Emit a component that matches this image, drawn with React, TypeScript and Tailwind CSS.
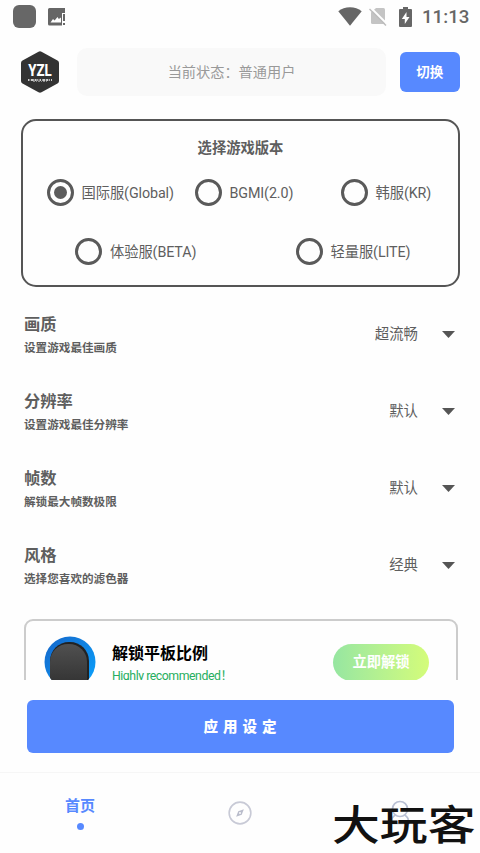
import React, { useState } from 'react';

interface Version {
  id: string;
  label: string;
  className: string;
}

interface Setting {
  title: string;
  subtitle: string;
  value: string;
  className: string;
}

const versionsTop: Version[] = [
  { id: 'global', label: '国际服(Global)', className: 'w-[148px]' },
  { id: 'bgmi', label: 'BGMI(2.0)', className: 'w-[146px]' },
  { id: 'kr', label: '韩服(KR)', className: '' },
];

const versionsBottom: Version[] = [
  { id: 'beta', label: '体验服(BETA)', className: 'w-[220.5px]' },
  { id: 'lite', label: '轻量服(LITE)', className: '' },
];

const settings: Setting[] = [
  { title: '画质', subtitle: '设置游戏最佳画质', value: '超流畅', className: 'h-[77px]' },
  { title: '分辨率', subtitle: '设置游戏最佳分辨率', value: '默认', className: 'h-[77px]' },
  { title: '帧数', subtitle: '解锁最大帧数极限', value: '默认', className: 'h-[77px]' },
  { title: '风格', subtitle: '选择您喜欢的滤色器', value: '经典', className: 'h-[75px]' },
];

const StatusBar: React.FC = () => (
  <div className="flex h-[33px] items-center pl-[13px] pr-[10px] text-[#666]">
    <div className="h-[23px] w-[23px] rounded-[6px] bg-[#676767]" />
    <svg className="ml-3 h-[18px] w-[18px]" viewBox="0 0 18 18" fill="currentColor">
      <path d="M1.500 0H17v5h-3v8.500h1V17.500H1.500A1.500 1.500 0 0 1 0 16V1.500A1.500 1.500 0 0 1 1.500 0Z" />
      <path d="M2.500 14.500 5 11l1.600 1.500L9.500 9l1.300 2L13 9.500v5Z" fill="#fefefe" />
      <path d="M14 5h4v13h-4z" fill="#fefefe" />
      <path d="M15 6h2v7h-2zM15 15h2v2h-2z" />
    </svg>
    <svg className="ml-auto h-[19px] w-[24px]" viewBox="0 0 24 19" fill="currentColor">
      <path d="M12 18.800.3 4.300C3.500 1.700 7.500.3 12 .3s8.500 1.400 11.700 4Z" />
    </svg>
    <svg className="ml-[7px] h-[19px] w-[18px]" viewBox="0 0 18 19">
      <path d="M7 1h7.500A1.500 1.500 0 0 1 16 2.500V17H3.500A1.500 1.500 0 0 1 2 15.500V5.500Z" fill="#c4c4c4" />
      <path d="M1.500.5 18.500 17.500" stroke="#fefefe" strokeWidth="2" />
      <path d="M.5 2 17 18.500" stroke="#bdbdbd" strokeWidth="1.500" />
    </svg>
    <svg className="ml-3 h-[20px] w-[13px]" viewBox="0 0 13 20" fill="currentColor">
      <path d="M4 0h5v2h3a1 1 0 0 1 1 1v16a1 1 0 0 1-1 1H1a1 1 0 0 1-1-1V3a1 1 0 0 1 1-1h3Z" />
      <path d="M7.500 5 2.800 12h3v5l4.700-7h-3Z" fill="#fff" />
    </svg>
    <span className="ml-[10px] w-[48px] whitespace-nowrap pt-px text-[18.700px] font-medium leading-none">11:13</span>
  </div>
);

const Logo: React.FC = () => (
  <svg className="ml-[21px] h-[42px] w-[38px]" viewBox="0 0 38 42">
    <path d="M17.500.700a3 3 0 0 1 3 0L36.500 9.500a3 3 0 0 1 1.500 2.600v17.800a3 3 0 0 1-1.500 2.600L20.500 41.300a3 3 0 0 1-3 0L1.500 32.500A3 3 0 0 1 0 29.900V12.100a3 3 0 0 1 1.500-2.600Z" fill="#333" />
    <text x="19" y="24.500" textAnchor="middle" textLength="23.500" lengthAdjust="spacingAndGlyphs" fontSize="17" fontWeight="800" fill="#fff">YZL</text>
    <path d="M7 29h24" stroke="#fff" strokeWidth="1.600" strokeDasharray="1.500 1.300 3 .8 2 .7 1 1.200" />
    <path d="M12 30.300h14" stroke="#bbb" strokeWidth=".8" strokeDasharray="2 1 1 1" />
  </svg>
);

const Header: React.FC = () => (
  <header className="mt-[15px] flex h-12 items-center">
    <Logo />
    <div className="ml-[18px] flex h-12 w-[309px] items-center justify-center rounded-[10px] bg-[#f9f9f9] pt-px text-[14.200px] text-[#999]">
      当前状态：普通用户
    </div>
    <button className="ml-[13.500px] h-10 w-[60.500px] rounded-[6px] bg-[#5789ff] text-[13.500px] font-bold text-white">
      切换
    </button>
  </header>
);

interface RadioProps {
  version: Version;
  checked: boolean;
  onSelect: (id: string) => void;
}

const Radio: React.FC<RadioProps> = ({ version, checked, onSelect }) => (
  <button className={`flex h-[27px] items-center ${version.className}`} onClick={() => onSelect(version.id)}>
    <span className="flex h-[27px] w-[27px] shrink-0 items-center justify-center rounded-full border-3 border-[#5a5a5a]">
      {checked && <span className="h-[13px] w-[13px] rounded-full bg-[#5c5c5c]" />}
    </span>
    <span className="ml-2 whitespace-nowrap pt-0.5 text-[14.300px] tracking-[-0.1px]">{version.label}</span>
  </button>
);

const VersionPicker: React.FC = () => {
  const [selected, setSelected] = useState('global');

  return (
    <section className="ml-[21px] mt-[23px] h-[168px] w-[439px] rounded-[15px] border-2 border-[#555] pt-4">
      <h2 className="text-center text-[14.300px] font-bold leading-[22px]">选择游戏版本</h2>
      <div className="mt-5 flex pl-[23.500px]">
        {versionsTop.map(v => <Radio key={v.id} version={v} checked={v.id === selected} onSelect={setSelected} />)}
      </div>
      <div className="mt-8 flex pl-[52px]">
        {versionsBottom.map(v => <Radio key={v.id} version={v} checked={v.id === selected} onSelect={setSelected} />)}
      </div>
    </section>
  );
};

const SettingRow: React.FC<{ setting: Setting }> = ({ setting }) => (
  <div className={`flex pl-6 pr-[25px] ${setting.className}`}>
    <div>
      <h3 className="text-[16.300px] font-bold leading-6">{setting.title}</h3>
      <p className="text-[11.600px] font-bold leading-[22px]">{setting.subtitle}</p>
    </div>
    <div className="ml-auto flex h-[43px] items-center">
      <span className="pt-px text-[14.400px]">{setting.value}</span>
      <svg className="ml-6 h-[7px] w-[13px]" viewBox="0 0 13 7" fill="#555">
        <path d="M0 0h13L6.500 7Z" />
      </svg>
    </div>
  </div>
);

const PromoCard: React.FC = () => (
  <div className="ml-[23.500px] flex h-[90px] w-[434px] rounded-[9px] border-2 border-[#ccc] pl-[18.500px]">
    <svg className="mt-[15px] h-[52px] w-[52px]" viewBox="0 0 52 52">
      <defs>
        <linearGradient id="ring" x1="0" x2="1" y1="0" y2="1">
          <stop offset="0" stopColor="#1565c8" />
          <stop offset="1" stopColor="#0aa4ff" />
        </linearGradient>
        <linearGradient id="slab" x1="0" x2="0" y1="0" y2="1">
          <stop offset="0" stopColor="#505050" />
          <stop offset="1" stopColor="#303030" />
        </linearGradient>
        <clipPath id="disc">
          <circle cx="26" cy="26" r="25.500" />
        </clipPath>
      </defs>
      <circle cx="26" cy="26" r="25.500" fill="url(#ring)" />
      <g clipPath="url(#disc)">
        <path d="M6 52V25a19 19 0 0 1 19-19h1a19 19 0 0 1 19 19v27Z" fill="#222" />
        <path d="M6 52V26a18 18 0 0 1 18-18h1a18 18 0 0 1 18 18v26Z" fill="url(#slab)" />
      </g>
    </svg>
    <div className="ml-[16px] mt-[21px]">
      <h3 className="text-[16px] font-bold leading-6 text-black">解锁平板比例</h3>
      <p className="text-[12.300px] leading-5 tracking-[-0.450px] text-[#27ae60]">Highly recommended！</p>
    </div>
    <button className="ml-auto mr-[26.500px] mt-[23px] h-[37px] w-24 rounded-full bg-linear-to-r from-[#96e6a1] to-[#d4fc79] text-[14.300px] font-bold text-white">
      立即解锁
    </button>
  </div>
);

const BottomNav: React.FC = () => (
  <nav className="mt-[19px] grid h-[81px] grid-cols-3 border-t border-[#f6f6f6]">
    <div className="flex flex-col items-center pt-[21px] text-[#5789ff]">
      <span className="text-[15px] font-bold leading-6">首页</span>
      <span className="mt-[5px] h-[7px] w-[7px] rounded-full bg-[#5789ff]" />
    </div>
    <div className="flex justify-center pt-[28px]">
      <svg className="h-[24px] w-[24px]" viewBox="0 0 25 25">
        <circle cx="12.500" cy="12.500" r="11.300" fill="none" stroke="#c8cad6" strokeWidth="1.700" />
        <path d="m16.500 8.500-2.200 5.800-5.800 2.200 2.200-5.800Z" fill="#b9bccb" />
        <circle cx="12.500" cy="12.500" r="1" fill="#fff" />
      </svg>
    </div>
    <div className="relative flex justify-center pt-[27px]">
      <svg className="h-[25px] w-[20px]" viewBox="0 0 20 25" fill="none" stroke="#b9c0d4" strokeWidth="1.700">
        <circle cx="10" cy="9" r="7.500" />
        <path d="M5.500 15Q1 17 1.500 23.500h17Q19 17 14.500 15" />
      </svg>
      <span className="absolute left-[12px] top-[27px] origin-left scale-x-[1.040] scale-y-[0.880] whitespace-nowrap text-[46px] font-medium leading-[52px] text-[#111]">
        大玩客
      </span>
    </div>
  </nav>
);

export default function App() {
  return (
    <div className="h-[853px] w-[480px] overflow-hidden bg-[#fefefe] font-[Roboto,'Noto_Sans_CJK_SC',sans-serif] text-[#5e5e5e]">
      <StatusBar />
      <Header />
      <main className="h-[584px] overflow-hidden">
        <VersionPicker />
        <div className="mt-[26px]">
          {settings.map(s => <SettingRow key={s.title} setting={s} />)}
        </div>
        <PromoCard />
      </main>
      <button className="ml-[27px] mt-5 block h-[53px] w-[427px] rounded-[6px] bg-[#5789ff] pl-1 pt-0.5 text-[14.500px] font-black tracking-[5px] text-white">
        应用设定
      </button>
      <BottomNav />
    </div>
  );
}
